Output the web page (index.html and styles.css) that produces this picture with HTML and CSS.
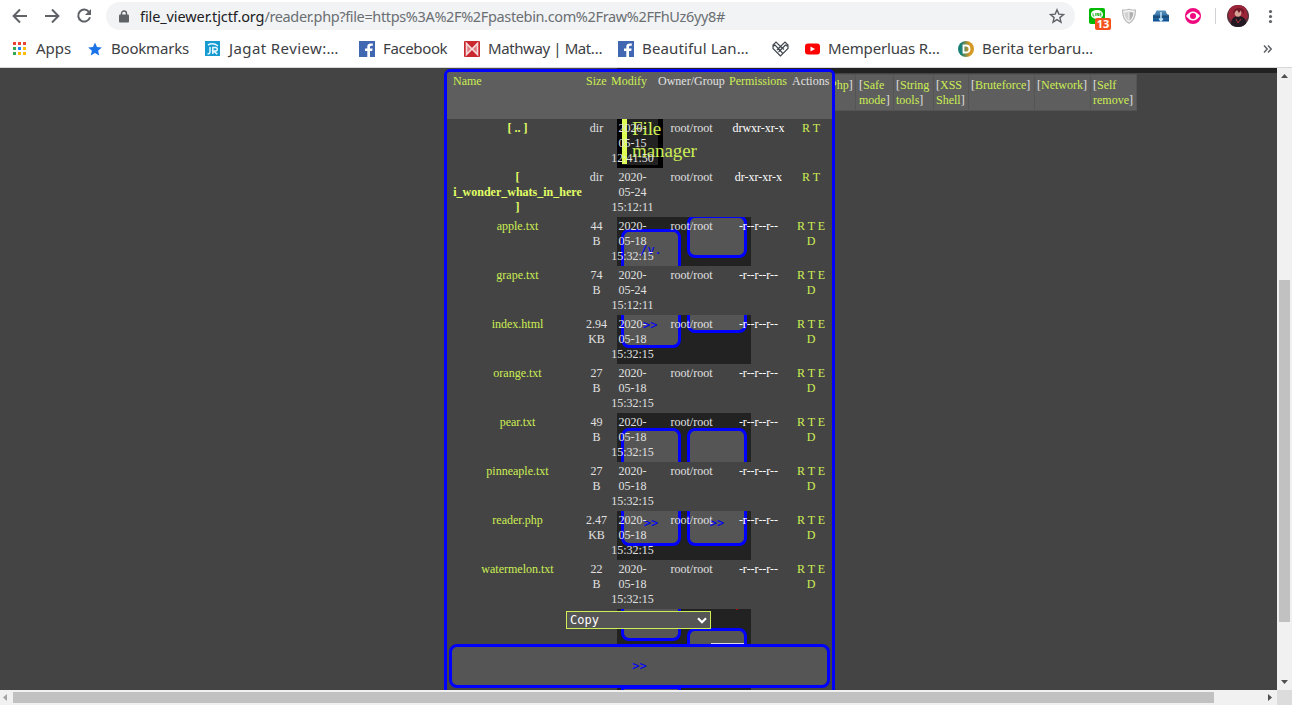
FILE: index.html
```
<!DOCTYPE html>
<html lang="en">
<head>
<meta charset="utf-8">
<title>file_viewer.tjctf.org</title>
<link rel="stylesheet" href="styles.css">
</head>
<body>
<div class="browser">
  <header class="chrome">
    <div class="toolbar">
      <svg class="nav" width="96" height="30" viewBox="0 0 96 30" fill="none" stroke="#5f6368" stroke-width="2">
        <path d="M27 16H14M20 9.500L13.600 16l6.400 6.500M45 16h13M52 9.500l6.400 6.500-6.400 6.500"/>
        <path d="M89.200 12.200A6 6 0 1 0 90 17.200"/><path d="M91 9v6h-6z" fill="#5f6368" stroke="none"/>
      </svg>
      <div class="omnibox">
        <svg class="lock" width="10" height="13" viewBox="0 0 10 13"><path d="M2.500 5V3.500a2.500 2.500 0 0 1 5 0V5" fill="none" stroke="#5f6368" stroke-width="1.400"/><rect y="4.500" width="10" height="8" rx="1" fill="#5f6368"/></svg>
        <span class="url"><b>file_viewer.tjctf.org</b>/reader.php?file=https%3A%2F%2Fpastebin.com%2Fraw%2FFhUz6yy8#</span>
        <svg class="fav" width="16" height="16" viewBox="0 0 16 16"><path d="M8 1.800l1.800 4.300 4.700.4-3.600 3.100 1.100 4.600-4-2.500-4 2.500 1.100-4.600L1.500 6.500l4.700-.4z" fill="none" stroke="#5f6368" stroke-width="1.400"/></svg>
      </div>
      <svg class="extensions" width="208" height="32" viewBox="0 0 208 32">
        <defs><linearGradient id="teal" x2="0" y2="1"><stop stop-color="#5a93bd"/><stop offset="1" stop-color="#0b4e92"/></linearGradient><clipPath id="face"><circle cx="154" cy="16" r="11"/></clipPath></defs>
        <rect x="5" y="8" width="16" height="16" rx="2" fill="#00b900"/><path d="M7 14.500c0-3 2.500-4.500 6-4.500s6 1.800 6 4.500c0 2.500-3 4.500-6 6-.5-1 0-1.500-.5-1.600-3-.2-5.500-1.900-5.500-4.400z" fill="#fff"/><path d="M9 13v3h1.500M11.700 13v3M13 16v-3l1.600 3v-3M17.500 13H16v3h1.500M16 14.500h1.500" fill="none" stroke="#00a900" stroke-width=".7"/>
        <rect x="11" y="18" width="16" height="12" rx="2" fill="#f4511e"/><text x="19" y="28" class="badge-count">13</text>
        <path d="M45 9.200q-3 1-6.500 1 0 9.500 6.500 13Q51.500 19.700 51.500 10.200q-3.500 0-6.500-1z" fill="#f4f4f4" stroke="#bbb" stroke-width="1.200"/><path d="M44.500 11.500V21q-4-3-4.300-8.500 2.500 0 4.300-1z" fill="#d2d2d2"/><path d="M45.500 11.500q2 1 4 1Q49 18 45.500 21z" fill="#b0b0b0"/>
        <path d="M69 15l2-1 1.500-3.500h9L83 14l2 1v6.500H69z" fill="url(#teal)"/><path d="M69 15.500h16V18H69z" fill="#1b4f7d"/><path d="M77 12v9M75.200 18.500L77 21l1.800-2.500" stroke="#c4e6fa" stroke-width="1.500" fill="none"/>
        <circle cx="109" cy="16" r="8" fill="#f0087f"/><path d="M102 16q7-9 14 0-7 9-14 0z" fill="#fff"/><circle cx="109" cy="16" r="3" fill="#f0087f"/>
        <path d="M131.500 8v16" stroke="#d0d2d5"/>
        <g clip-path="url(#face)"><path d="M143 5h22v22h-22z" fill="#56343e"/><path d="M146 5h15l3 12-5 6H148l-4-7z" fill="#9b2438"/><path d="M147 23q1-7 7-7t8 5v7h-15z" fill="#221923"/><ellipse cx="154" cy="13" rx="3.300" ry="3.800" fill="#d4a395"/><path d="M149 14q0-6 6-6t5 6l-3-4-2 3-2-3z" fill="#6f162a"/><path d="M152 19l2 4 3-4" stroke="#a93241" fill="none"/></g>
        <g fill="#5f6368"><circle cx="186.500" cy="11.500" r="1.600"/><circle cx="186.500" cy="16.500" r="1.600"/><circle cx="186.500" cy="21.500" r="1.600"/></g>
      </svg>
    </div>
    <nav class="bookmarks">
      <div class="mark apps"><svg width="14" height="14" viewBox="0 0 14 14"><path d="M0 0h3v3H0zM5 0h3v3H5zM10 0h3v3h-3z" fill="#ea4335"/><path d="M0 5h3v3H0zM0 10h3v3H0z" fill="#34a853"/><path d="M5 5h3v3H5z" fill="#1a83f5"/><path d="M10 5h3v3h-3zM5 10h3v3H5zM10 10h3v3h-3z" fill="#fbbc05"/></svg><span>Apps</span></div>
      <div class="mark starred"><svg width="14" height="14" viewBox="0 0 14 14"><path d="M7 .5l2 4.600 4.800.4-3.700 3.200 1.200 4.900L7 11l-4.300 2.600 1.200-4.900L.2 5.500 5 5.100z" fill="#1a73e8"/></svg><span>Bookmarks</span></div>
      <div class="mark jagat"><svg width="16" height="16" viewBox="0 0 16 16"><rect width="15" height="15" fill="#159bd0"/><path d="M5 6v5q0 2-2.500 1.800M7.800 13V6.500h2.500q2 0 2 1.800t-2 1.800H8.500l3.800 3M3 4q5-3 10 1" fill="none" stroke="#e6f7ff" stroke-width="1.500"/></svg><span>Jagat Review:…</span></div>
      <div class="mark facebook"><svg width="16" height="16" viewBox="0 0 16 16"><path d="M0 0h16v16H0z" fill="#4267b2"/><path d="M11 16v-6h2.200l.4-2.500H11V6q0-1.200 1.300-1.200h1.500V2.600Q8.300 1.700 8.300 5.500v2H6V10h2.300v6z" fill="#fff"/></svg><span>Facebook</span></div>
      <div class="mark mathway"><svg width="16" height="16" viewBox="0 0 16 16"><rect width="16" height="16" rx="1" fill="#c9282f"/><path d="M2.500 13.500v-11L8 8l5.500-5.500v11L8 8z" fill="#e27a7e" stroke="#f4dcdc" stroke-width="1.600"/></svg><span>Mathway | Mat…</span></div>
      <div class="mark beautiful"><svg width="16" height="16" viewBox="0 0 16 16"><path d="M0 0h16v16H0z" fill="#4267b2"/><path d="M11 16v-6h2.200l.4-2.500H11V6q0-1.200 1.300-1.200h1.500V2.600Q8.300 1.700 8.300 5.500v2H6V10h2.300v6z" fill="#fff"/></svg><span>Beautiful Lan…</span></div>
      <div class="mark heart"><svg width="17" height="16" viewBox="0 0 17 16" fill="none" stroke="#41484f" stroke-width="1.200"><path d="M8.500 15L1 7.500V4l3-3 4.500 4.500L13 1l3 3v3.500zM1 5.500l2-1.500 7.500 8M16 5.500L13.500 4 6.500 11M8.500 5.500L5 9M8.500 5.500l3.500 3"/></svg></div>
      <div class="mark video"><svg width="15" height="12" viewBox="0 0 15 12"><rect y=".5" width="15" height="11" rx="3" fill="#f00"/><path d="M5.500 3.500v5L10 6z" fill="#fff"/></svg><span>Memperluas R…</span></div>
      <div class="mark berita"><svg width="16" height="16" viewBox="0 0 16 16"><defs><linearGradient id="ring"><stop offset=".2" stop-color="#168078"/><stop offset=".7" stop-color="#d49825"/></linearGradient></defs><circle cx="8" cy="8" r="8" fill="url(#ring)"/><path d="M5.500 4.500H8q3.500 0 3.500 3.500T8 11.500H5.500z" fill="none" stroke="#fff" stroke-width="1.800"/></svg><span>Berita terbaru…</span></div>
      <svg class="more" width="10" height="8" viewBox="0 0 10 8"><path d="M1 .5L4.200 4 1 7.500M5 .5L8.200 4 5 7.500" fill="none" stroke="#5f6368" stroke-width="1.500"/></svg>
    </nav>
  </header>
  <div class="viewport">
    <main class="page">
      <div class="shade"></div>
      <div class="menu">
        <div>[<a>Php</a>]</div><div>[<a>Safe<br>mode</a>]</div><div>[<a>String<br>tools</a>]</div><div>[<a>XSS<br>Shell</a>]</div><div>[<a>Bruteforce</a>]</div><div>[<a>Network</a>]</div><div>[<a>Self<br>remove</a>]</div>
      </div>
      <section class="panel">
        <div class="under">
          <div class="key upper-left"><span>/v.</span></div>
          <div class="key upper-right"></div>
          <div class="key first-go"></div>
          <span class="go-one">&gt;&gt;</span>
          <div class="key middle-left"><span>&gt;&gt;</span></div>
          <div class="key middle-right"><span>&gt;&gt;</span></div>
          <div class="key lower-left"></div>
          <div class="key lower-right"><i></i></div>
          <div class="key last"></div>
          <i class="speck"></i>
        </div>
        <h1 class="title"><span>File<br>manager</span></h1>
        <div class="row head"><a>Name</a><a>Size</a><a>Modify</a><span>Owner/Group</span><a>Permissions</a><span>Actions</span></div>
        <div class="row"><a class="dir">[ .. ]</a><span>dir</span><span>2020-<br>05-15<br>12:41:50</span><span>root/root</span><em>drwxr-xr-x</em><a>R T</a></div>
        <div class="row solid"><a class="dir">[<br>i_wonder_whats_in_here<br>]</a><span>dir</span><span>2020-<br>05-24<br>15:12:11</span><span>root/root</span><em>dr-xr-xr-x</em><a>R T</a></div>
        <div class="row"><a>apple.txt</a><span>44<br>B</span><span>2020-<br>05-18<br>15:32:15</span><span>root/root</span><em>-r--r--r--</em><a>R T E<br>D</a></div>
        <div class="row solid"><a>grape.txt</a><span>74<br>B</span><span>2020-<br>05-24<br>15:12:11</span><span>root/root</span><em>-r--r--r--</em><a>R T E<br>D</a></div>
        <div class="row"><a>index.html</a><span>2.94<br>KB</span><span>2020-<br>05-18<br>15:32:15</span><span>root/root</span><em>-r--r--r--</em><a>R T E<br>D</a></div>
        <div class="row solid"><a>orange.txt</a><span>27<br>B</span><span>2020-<br>05-18<br>15:32:15</span><span>root/root</span><em>-r--r--r--</em><a>R T E<br>D</a></div>
        <div class="row"><a>pear.txt</a><span>49<br>B</span><span>2020-<br>05-18<br>15:32:15</span><span>root/root</span><em>-r--r--r--</em><a>R T E<br>D</a></div>
        <div class="row solid"><a>pinneaple.txt</a><span>27<br>B</span><span>2020-<br>05-18<br>15:32:15</span><span>root/root</span><em>-r--r--r--</em><a>R T E<br>D</a></div>
        <div class="row"><a>reader.php</a><span>2.47<br>KB</span><span>2020-<br>05-18<br>15:32:15</span><span>root/root</span><em>-r--r--r--</em><a>R T E<br>D</a></div>
        <div class="row solid"><a>watermelon.txt</a><span>22<br>B</span><span>2020-<br>05-18<br>15:32:15</span><span>root/root</span><em>-r--r--r--</em><a>R T E<br>D</a></div>
        <div class="actions">
          <div class="select">Copy<svg width="10" height="7" viewBox="0 0 10 7"><path d="M1 1.200l4 4 4-4" fill="none" stroke="#fff" stroke-width="2.200"/></svg></div>
          <div class="submit">&gt;&gt;</div>
        </div>
      </section>
    </main>
    <div class="scroll vertical"><svg width="7" height="4"><path d="M0 4L3.500 0 7 4z" fill="#505050"/></svg><i></i><svg width="7" height="4"><path d="M0 0h7L3.500 4z" fill="#505050"/></svg></div>
    <div class="scroll horizontal"><svg width="4" height="7"><path d="M4 0v7L0 3.500z" fill="#a3a3a3"/></svg><i></i><svg width="4" height="7"><path d="M0 0v7l4-3.500z" fill="#505050"/></svg></div>
    <div class="corner"></div>
  </div>
</div>
</body>
</html>
```
FILE: styles.css
```
* { box-sizing: border-box; }
body { margin: 0; overflow: hidden; }
.browser { width: 1292px; height: 705px; display: flex; flex-direction: column; }
.chrome { height: 68px; background: #fff; border-bottom: 1px solid #d5d7da; font-family: "Noto Sans", "Open Sans", sans-serif; color: #3c4043; }
.toolbar { height: 32px; display: flex; align-items: flex-start; }
.nav { width: 96px; margin-right: 10px; }
.omnibox { width: 969px; height: 28px; margin-top: 2px; border-radius: 14px; background: #f1f3f4; display: flex; align-items: center; padding: 0 10px 0 13px; }
.lock { margin-right: 11px; }
.url { font-size: 14.5px; line-height: 20px; color: #6b6f73; white-space: nowrap; letter-spacing: -0.36px; padding-bottom: 1px; }
.url b { font-weight: 400; color: #202124; letter-spacing: -0.1px; }
.fav { margin-left: auto; }
.extensions { margin-left: 9px; }
.badge-count { font-size: 11px; font-weight: 700; fill: #fff; text-anchor: middle; }
.bookmarks { height: 34px; display: flex; align-items: center; padding-left: 13px; }
.mark { display: flex; align-items: center; flex: none; font-size: 15px; line-height: 20px; white-space: nowrap; }
.mark span { margin-left: 8px; padding-bottom: 2px; }
.apps { width: 75px; }
.apps span, .starred span { margin-left: 9px; }
.starred { width: 117px; letter-spacing: -0.2px; }
.jagat { width: 154px; letter-spacing: 0.4px; }
.facebook { width: 105px; letter-spacing: -0.38px; }
.mathway { width: 154px; letter-spacing: -0.4px; }
.beautiful { width: 154px; letter-spacing: 0.14px; }
.heart { width: 33px; }
.video { width: 153px; letter-spacing: -0.16px; }
.more { margin-left: auto; margin-right: 19px; }

.viewport { height: 637px; display: grid; grid-template: 622px 15px / 1277px 15px; }
.page { position: relative; overflow: hidden; background: #444; font: 12px/15px "Liberation Serif", serif; color: #e1e1e1; }
a { color: #cdee54; }
.shade { margin-left: 617px; height: 5px; background: #222; }
.menu { margin: 1px 0 0 828px; display: flex; gap: 1px; padding: 1px; width: 309px; height: 37px; background: #555; }
.menu div { background: #5e5e5e; padding: 3px 2px 0; flex: none; }
.menu div:nth-child(1) { width: 26px; padding-left: 0; text-indent: -3px; }
.menu div:nth-child(2) { width: 37px; padding-left: 3px; }
.menu div:nth-child(3) { width: 39px; }
.menu div:nth-child(4) { width: 34px; }
.menu div:nth-child(5) { width: 65px; }
.menu div:nth-child(6) { width: 55px; }
.menu div:nth-child(7) { width: 45px; }

.panel { position: absolute; left: 444px; top: 1px; width: 391px; height: 660px; border: 3px solid #00f; border-radius: 6px; background: #444; overflow: hidden; }
.row { position: relative; height: 49px; padding: 2px 0 0 6px; display: grid; grid-template-columns: 129px 21px 43px 67px 59px 38px; column-gap: 4px; text-align: center; white-space: nowrap; }
.row > * { justify-self: center; }
.head { height: 47px; background: #5e5e5e; text-align: left; }
.head > * { justify-self: start; }
.solid { background: #444; }
.dir { font-weight: 700; color: #e1ff66; }
em { font-style: normal; color: #fff; }

.under { position: absolute; left: 170px; top: 140px; width: 134px; height: 500px; background: #222; color: #00f; font: 12px/15px "DejaVu Sans Mono", monospace; }
.key { position: absolute; left: 4px; width: 60px; border: 3px solid #00f; border-radius: 8px; background: #555; text-align: center; }
.upper-left { top: 17px; height: 119px; padding-top: 11px; }
.upper-right { left: 70px; top: 3px; height: 43px; }
.first-go { left: 70px; top: 65px; height: 56px; }
.go-one { position: absolute; left: 26px; top: 106px; }
.middle-left, .middle-right { top: 216px; height: 118px; padding-top: 85px; }
.middle-right { left: 70px; }
.lower-left { top: 376px; height: 53px; }
.lower-right { left: 70px; top: 416px; height: 52px; }
.lower-right i { display: block; height: 3px; margin: 12px 0 0 21px; background: #ddd; }
.last { top: 474px; height: 60px; border-radius: 0; }
.speck { position: absolute; left: 119px; top: 397px; width: 2px; height: 1px; background: #a00; }
.title { position: absolute; left: 170px; top: 40px; width: 46px; height: 56px; margin: 0; border: solid #000; border-width: 0 5px 3px; background: #222; font: 19px/22px "Liberation Serif", serif; color: #cdee54; }
.title span { display: block; height: 52px; padding: 6px 0 0 5px; border-left: 5px solid #dfff55; letter-spacing: -0.1px; }

.actions { position: relative; height: 85px; padding-top: 2px; }
.select { width: 145px; height: 18px; margin-left: 119px; border: 1px solid #cdee54; background: #555; color: #fff; display: flex; align-items: center; justify-content: space-between; padding: 0 3px; font: 12px/16px "DejaVu Sans Mono", monospace; }
.submit { width: 381px; height: 44px; margin: 15px 0 0 2px; border: 3px solid #00f; border-radius: 8px; background: #555; color: #00f; text-align: center; font: 12px/38px "DejaVu Sans Mono", monospace; }

.scroll { background: #f1f1f1; display: flex; align-items: center; }
.scroll i { background: #c1c1c1; }
.scroll svg { display: block; }
.vertical { flex-direction: column; padding-top: 6px; }
.vertical i { width: 11px; height: 342px; margin: 202px 0 58px; }
.horizontal { padding-left: 3px; }
.horizontal i { width: 1201px; height: 11px; margin: 0 54px 0 6px; }
.corner { background: #dcdcdc; }
```
